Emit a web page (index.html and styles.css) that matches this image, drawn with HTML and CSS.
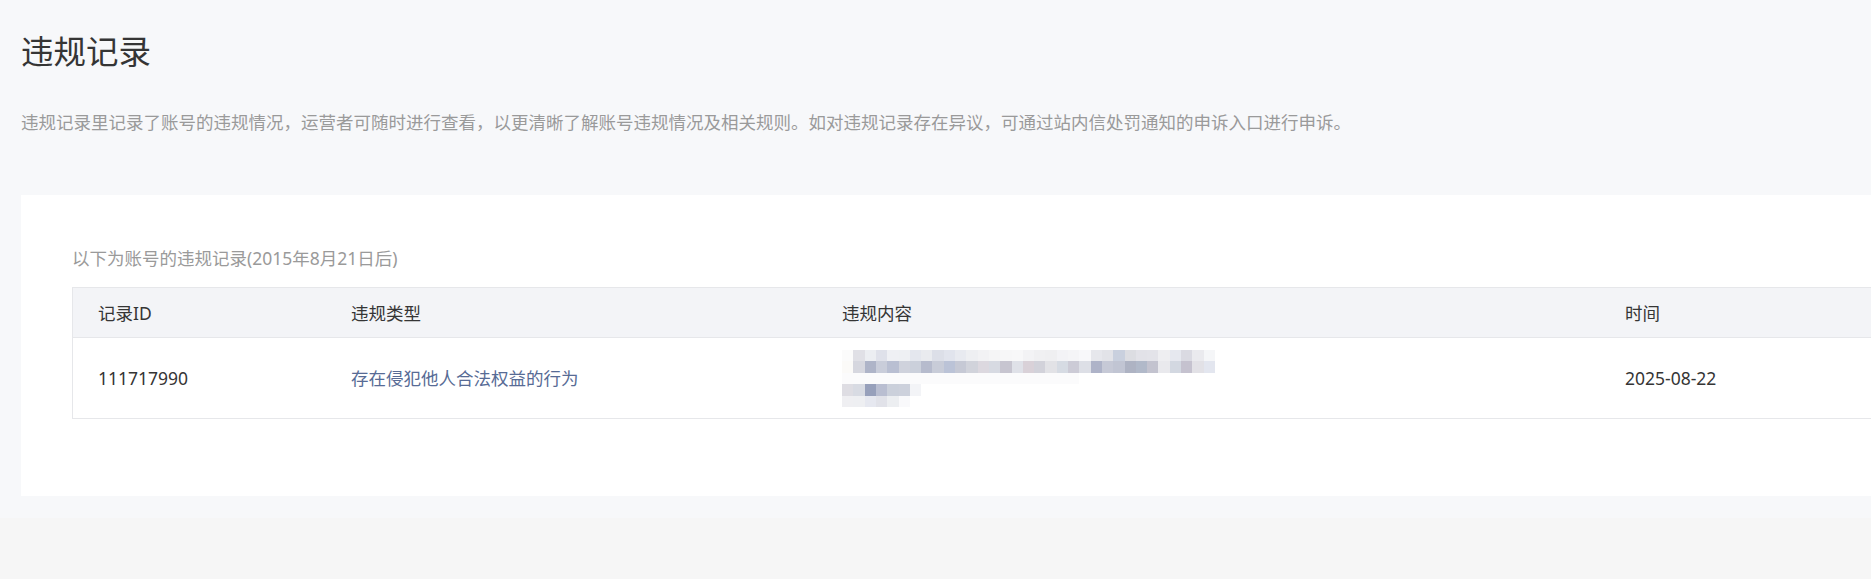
FILE: index.html
```html
<!DOCTYPE html>
<html lang="zh-CN">
<head>
<meta charset="utf-8">
<title>违规记录</title>
<link rel="stylesheet" href="styles.css">
</head>
<body>
<div class="page">
  <h1 class="title">违规记录</h1>
  <p class="desc">违规记录里记录了账号的违规情况，运营者可随时进行查看，以更清晰了解账号违规情况及相关规则。如对违规记录存在异议，可通过站内信处罚通知的申诉入口进行申诉。</p>
  <section class="card">
    <p class="note">以下为账号的违规记录(2015年8月21日后)</p>
    <table class="records">
      <colgroup>
        <col class="c-id">
        <col class="c-type">
        <col class="c-content">
        <col class="c-time">
      </colgroup>
      <thead>
        <tr><th>记录ID</th><th>违规类型</th><th>违规内容</th><th>时间</th></tr>
      </thead>
      <tbody>
        <tr>
          <td>111717990</td>
          <td class="type">存在侵犯他人合法权益的行为</td>
          <td class="content">
            <svg class="blur" width="373" height="57" viewBox="0 0 33 5" preserveAspectRatio="none" shape-rendering="crispEdges" aria-hidden="true">
              <g>
                <rect x="0" y="0" width="1" height="1" fill="#fbfbfb"/>
                <rect x="1" y="0" width="1" height="1" fill="#e0e0e6"/>
                <rect x="2" y="0" width="1" height="1" fill="#eceef2"/>
                <rect x="3" y="0" width="1" height="1" fill="#dfe1ea"/>
                <rect x="4" y="0" width="1" height="1" fill="#eff0f4"/>
                <rect x="5" y="0" width="1" height="1" fill="#eef0f3"/>
                <rect x="6" y="0" width="1" height="1" fill="#e4e7ee"/>
                <rect x="7" y="0" width="1" height="1" fill="#e9ebef"/>
                <rect x="8" y="0" width="1" height="1" fill="#dcdfe8"/>
                <rect x="9" y="0" width="1" height="1" fill="#e1e4ed"/>
                <rect x="10" y="0" width="1" height="1" fill="#e8eaf0"/>
                <rect x="11" y="0" width="1" height="1" fill="#eeeff2"/>
                <rect x="12" y="0" width="1" height="1" fill="#f2f2f4"/>
                <rect x="13" y="0" width="1" height="1" fill="#f5f5f6"/>
                <rect x="14" y="0" width="1" height="1" fill="#f7f7f8"/>
                <rect x="15" y="0" width="1" height="1" fill="#f8f8f9"/>
                <rect x="16" y="0" width="1" height="1" fill="#f3f3f5"/>
                <rect x="17" y="0" width="1" height="1" fill="#f0f0f2"/>
                <rect x="18" y="0" width="1" height="1" fill="#efeff1"/>
                <rect x="19" y="0" width="1" height="1" fill="#f3f3f6"/>
                <rect x="20" y="0" width="1" height="1" fill="#f5f5f7"/>
                <rect x="21" y="0" width="1" height="1" fill="#f8f8fa"/>
                <rect x="22" y="0" width="1" height="1" fill="#e6e7ec"/>
                <rect x="23" y="0" width="1" height="1" fill="#e2e3e8"/>
                <rect x="24" y="0" width="1" height="1" fill="#c9d0de"/>
                <rect x="25" y="0" width="1" height="1" fill="#dcdde2"/>
                <rect x="26" y="0" width="1" height="1" fill="#e2e2e8"/>
                <rect x="27" y="0" width="1" height="1" fill="#e3e3e9"/>
                <rect x="28" y="0" width="1" height="1" fill="#eeeef1"/>
                <rect x="29" y="0" width="1" height="1" fill="#e6e8ef"/>
                <rect x="30" y="0" width="1" height="1" fill="#dadae2"/>
                <rect x="31" y="0" width="1" height="1" fill="#eaeaee"/>
                <rect x="32" y="0" width="1" height="1" fill="#f5f6f8"/>
              </g>
              <g>
                <rect x="0" y="1" width="1" height="1" fill="#fbfaf8"/>
                <rect x="1" y="1" width="1" height="1" fill="#d6d7df"/>
                <rect x="2" y="1" width="1" height="1" fill="#aeb4c8"/>
                <rect x="3" y="1" width="1" height="1" fill="#c9cdda"/>
                <rect x="4" y="1" width="1" height="1" fill="#b9bfd2"/>
                <rect x="5" y="1" width="1" height="1" fill="#cfd2dc"/>
                <rect x="6" y="1" width="1" height="1" fill="#cbd0db"/>
                <rect x="7" y="1" width="1" height="1" fill="#b6bbcd"/>
                <rect x="8" y="1" width="1" height="1" fill="#c8ccd8"/>
                <rect x="9" y="1" width="1" height="1" fill="#bbc3d7"/>
                <rect x="10" y="1" width="1" height="1" fill="#c6c9d5"/>
                <rect x="11" y="1" width="1" height="1" fill="#d1d3db"/>
                <rect x="12" y="1" width="1" height="1" fill="#dcd8df"/>
                <rect x="13" y="1" width="1" height="1" fill="#d7dae2"/>
                <rect x="14" y="1" width="1" height="1" fill="#c7c5d0"/>
                <rect x="15" y="1" width="1" height="1" fill="#dfe1e8"/>
                <rect x="16" y="1" width="1" height="1" fill="#d9d1d8"/>
                <rect x="17" y="1" width="1" height="1" fill="#d2d2da"/>
                <rect x="18" y="1" width="1" height="1" fill="#e2e2e6"/>
                <rect x="19" y="1" width="1" height="1" fill="#d6dbe3"/>
                <rect x="20" y="1" width="1" height="1" fill="#cccbd6"/>
                <rect x="21" y="1" width="1" height="1" fill="#dddfe6"/>
                <rect x="22" y="1" width="1" height="1" fill="#aeb3c8"/>
                <rect x="23" y="1" width="1" height="1" fill="#c6c9d6"/>
                <rect x="24" y="1" width="1" height="1" fill="#c1c5d3"/>
                <rect x="25" y="1" width="1" height="1" fill="#aeb3c3"/>
                <rect x="26" y="1" width="1" height="1" fill="#b1b9c9"/>
                <rect x="27" y="1" width="1" height="1" fill="#c3c3cf"/>
                <rect x="28" y="1" width="1" height="1" fill="#e9e9ed"/>
                <rect x="29" y="1" width="1" height="1" fill="#d3d8e1"/>
                <rect x="30" y="1" width="1" height="1" fill="#c5c2cf"/>
                <rect x="31" y="1" width="1" height="1" fill="#e2e1e6"/>
                <rect x="32" y="1" width="1" height="1" fill="#e3e6ef"/>
              </g>
              <rect x="0" y="2" width="21" height="1" fill="#fbfbfc"/>
              <g>
                <rect x="0" y="3" width="1" height="1" fill="#dedde3"/>
                <rect x="1" y="3" width="1" height="1" fill="#d8dbe3"/>
                <rect x="2" y="3" width="1" height="1" fill="#97a0bb"/>
                <rect x="3" y="3" width="1" height="1" fill="#b9bed1"/>
                <rect x="4" y="3" width="1" height="1" fill="#cbd0db"/>
                <rect x="5" y="3" width="1" height="1" fill="#cdd1dc"/>
                <rect x="6" y="3" width="1" height="1" fill="#f3f4f7"/>
              </g>
              <g>
                <rect x="0" y="4" width="1" height="1" fill="#efeff2"/>
                <rect x="1" y="4" width="1" height="1" fill="#eeeff2"/>
                <rect x="2" y="4" width="1" height="1" fill="#e6e8f0"/>
                <rect x="3" y="4" width="1" height="1" fill="#e1e2e9"/>
                <rect x="4" y="4" width="1" height="1" fill="#eceef1"/>
                <rect x="5" y="4" width="1" height="1" fill="#f9f9fb"/>
              </g>
            </svg>
          </td>
          <td>2025-08-22</td>
        </tr>
      </tbody>
    </table>
  </section>
</div>
</body>
</html>
```

FILE: styles.css
```css
html, body {
  margin: 0;
  padding: 0;
}

body {
  background: #f6f6f6;
  font-family: "Noto Sans", "Noto Sans CJK SC", sans-serif;
  overflow: hidden;
  color: #333;
}

.page {
  background: #f7f8fa;
  padding: 30px 0 22px 21px;
}

.title {
  margin: 0;
  font-size: 32.5px;
  line-height: 44px;
  font-weight: 400;
  color: #353535;
}

.desc {
  margin: 36px 0 0;
  font-size: 17.5px;
  line-height: 25px;
  color: #9a9a9a;
  white-space: nowrap;
}

.card {
  margin-top: 60px;
  width: 1950px;
  background: #fff;
  padding: 51px 0 77px 51px;
}

.note {
  margin: 0 0 16px;
  font-size: 17.5px;
  line-height: 25px;
  color: #9a9a9a;
}

.records {
  width: 1899px;
  table-layout: fixed;
  border-collapse: separate;
  border-spacing: 0;
  border: 1px solid #e6e7ea;
  font-size: 17.5px;
}

.c-id { width: 253px; }
.c-type { width: 491px; }
.c-content { width: 783px; }

.records th {
  text-align: left;
  font-weight: 400;
  color: #353535;
  background: #f3f4f7;
  padding: 12.5px 25px;
  line-height: 24px;
  border-bottom: 1px solid #e6e7ea;
}

.records td {
  padding: 11px 25px;
  line-height: 24px;
  color: #353535;
  vertical-align: middle;
}

.records .type {
  color: #576b95;
}

.blur {
  display: block;
  margin-top: 1px;
}
```
